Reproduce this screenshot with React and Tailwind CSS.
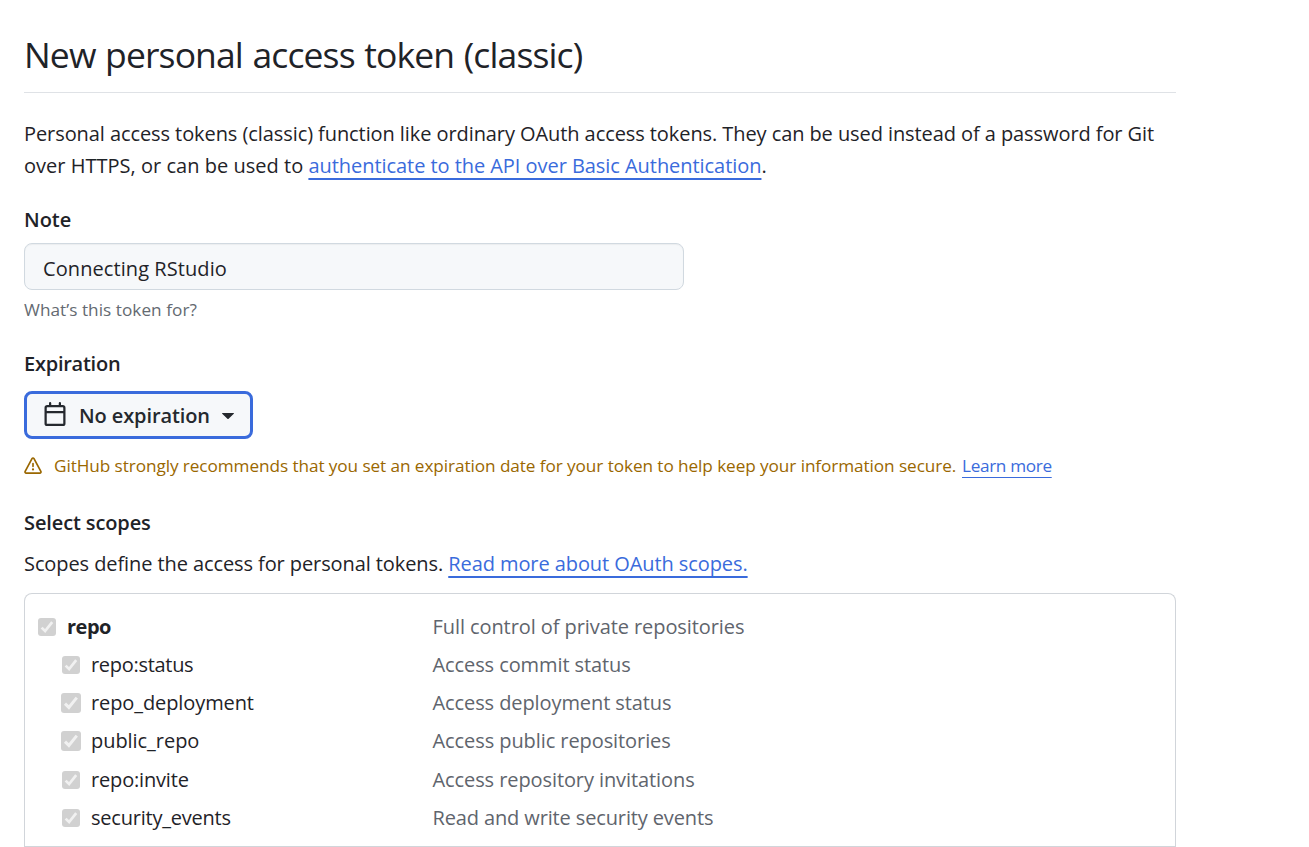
function CalendarIcon() {
  return (
    <svg className="mb-[2px] h-6 w-6 shrink-0" viewBox="0 0 16 16" fill="#25292e">
      <path d="M4.75 0a.75.75 0 0 1 .75.75V2h5V.75a.75.75 0 0 1 1.5 0V2h1.25c.966 0 1.75.784 1.75 1.75v10.5A1.75 1.75 0 0 1 13.25 16H2.75A1.75 1.75 0 0 1 1 14.25V3.75C1 2.784 1.784 2 2.75 2H4V.75A.75.75 0 0 1 4.75 0ZM2.5 7.5v6.75c0 .138.112.25.25.25h10.5a.25.25 0 0 0 .25-.25V7.5Zm10.75-4H2.75a.25.25 0 0 0-.25.25V6h11V3.75a.25.25 0 0 0-.25-.25Z" />
    </svg>
  );
}

function AlertIcon() {
  return (
    <svg className="h-[18px] w-[18px] shrink-0" viewBox="0 0 16 16" fill="#9a6700">
      <path d="M6.457 1.047c.659-1.234 2.427-1.234 3.086 0l6.082 11.378A1.75 1.75 0 0 1 14.082 15H1.918a1.75 1.75 0 0 1-1.543-2.575Zm1.763.707a.25.25 0 0 0-.44 0L1.698 13.132a.25.25 0 0 0 .22.368h12.164a.25.25 0 0 0 .22-.368Zm.53 3.996v2.5a.75.75 0 0 1-1.5 0v-2.5a.75.75 0 0 1 1.5 0ZM9 11a1 1 0 1 1-2 0 1 1 0 0 1 2 0Z" />
    </svg>
  );
}

function Checkbox({ size }) {
  return (
    <span className="flex w-5 shrink-0 justify-center">
      <svg className={`${size} shrink-0 rounded-[3px] bg-[#d1d1d1]`} viewBox="0 0 18 18" fill="none">
        <path d="M3.6 9.6 7.1 13 14.2 4.2" stroke="#f1f1f1" strokeWidth="2.7" />
      </svg>
    </span>
  );
}

const small = "h-[18px] w-[18px]";
const large = "h-5 w-5";

const scopes = [
  { name: "repo:status", text: "Access commit status", size: small, nameClass: "tracking-[-0.3px]", textClass: "tracking-[-0.09px]" },
  { name: "repo_deployment", text: "Access deployment status", size: large, nameClass: "tracking-[-0.1px]", textClass: "tracking-[-0.09px]" },
  { name: "public_repo", text: "Access public repositories", size: large, nameClass: "tracking-[-0.05px]", textClass: "tracking-[-0.08px]" },
  { name: "repo:invite", text: "Access repository invitations", size: small, nameClass: "tracking-[-0.17px]", textClass: "tracking-[-0.09px]" },
  { name: "security_events", text: "Read and write security events", size: small, nameClass: "tracking-[-0.22px]", textClass: "tracking-[-0.13px]" },
];

const link =
  "text-[#3a6bdc] underline decoration-2 underline-offset-[5px] [text-decoration-skip-ink:none]";

export default function App() {
  return (
    <main className="h-[847px] w-full overflow-hidden bg-white pl-6 font-['Open_Sans',sans-serif] text-[20px] leading-8 text-[#1f2328]">
      <div className="w-[1152px]">
        <h1 className="h-[93px] border-b border-[#dfe2e6] pt-[30px] text-[35.5px] leading-[48px] tracking-[-0.88px] whitespace-nowrap [word-spacing:1.2px]">
          New personal access token (classic)
        </h1>

        <p className="pt-[25px] whitespace-nowrap">
          <span className="tracking-[-0.08px]">
            Personal access tokens (classic) function like ordinary OAuth access tokens. They can be used instead of a password for Git
          </span>
          <br />
          <span className="tracking-[0.02px]">over HTTPS, or can be used to </span>
          <a href="#auth" className={`${link} tracking-[-0.05px]`}>authenticate to the API over Basic Authentication</a>.
        </p>

        <label htmlFor="note" className="mt-[22px] block font-semibold">Note</label>
        <input
          id="note"
          defaultValue="Connecting RStudio"
          className="mt-[7px] block h-[47px] w-[660px] rounded-lg border border-[#d1d9e0] bg-[#f6f8fa] px-[18px] pt-1 tracking-[0.08px] shadow-[inset_0_1px_1px_rgba(31,35,40,0.05)] outline-none"
        />
        <p className="mt-[6px] h-7 text-[17.2px] leading-7 tracking-[0.04px] text-[#646a71]">What’s this token for?</p>

        <h2 className="mt-[24px] font-semibold tracking-[-0.25px]">Expiration</h2>
        <button className="mt-[11px] flex h-12 w-[229px] items-center rounded-lg border-[3px] border-[#3a6bdc] bg-[#f6f8fa] pl-4 text-[#25292e]">
          <CalendarIcon />
          <span className="ml-3 pt-[2px] font-semibold tracking-[-0.1px] whitespace-nowrap">No expiration</span>
          <svg className="ml-3 mt-px h-[6px] w-3" viewBox="0 0 12 6" fill="#25292e">
            <path d="M.5 0h11a.4.4 0 0 1 .3.7L6.6 5.7a.9.9 0 0 1-1.2 0L.2.7A.4.4 0 0 1 .5 0Z" />
          </svg>
        </button>
        <p className="mt-[13px] flex h-7 items-center text-[17.2px] leading-7 whitespace-nowrap text-[#9a6700]">
          <AlertIcon />
          <span className="ml-[12px] w-[908px] tracking-[-0.08px]">
            GitHub strongly recommends that you set an expiration date for your token to help keep your information secure.
          </span>
          <a href="#more" className="tracking-[-0.34px] text-[#3a6bdc] underline decoration-1 underline-offset-[5px] [text-decoration-skip-ink:none]">
            Learn more
          </a>
        </p>

        <h2 className="mt-[27px] font-semibold tracking-[-0.12px]">Select scopes</h2>
        <p className="mt-[9px] whitespace-nowrap">
          <span className="tracking-[-0.09px]">Scopes define the access for personal tokens. </span>
          <a href="#scopes" className={`${link} tracking-[-0.08px]`}>Read more about OAuth scopes.</a>
        </p>

        <section className="mt-[13px] h-[270px] rounded-t-lg border border-b-0 border-[#d1d5da]">
          <div className="flex h-[253px] flex-col border-b border-[#d1d5da] pt-[13.8px]">
            <div className="flex h-[38.2px] items-center pl-3">
              <Checkbox size={small} />
              <span className="ml-[10px] w-[365.5px] font-bold tracking-[-0.5px]">repo</span>
              <span className="tracking-[-0.08px] text-[#5f656d]">Full control of private repositories</span>
            </div>
            {scopes.map((s) => (
              <div key={s.name} className="flex h-[38.2px] items-center pl-9">
                <Checkbox size={s.size} />
                <span className={`ml-[10px] w-[341.5px] ${s.nameClass}`}>{s.name}</span>
                <span className={`text-[#5f656d] ${s.textClass}`}>{s.text}</span>
              </div>
            ))}
          </div>
        </section>
      </div>
    </main>
  );
}
